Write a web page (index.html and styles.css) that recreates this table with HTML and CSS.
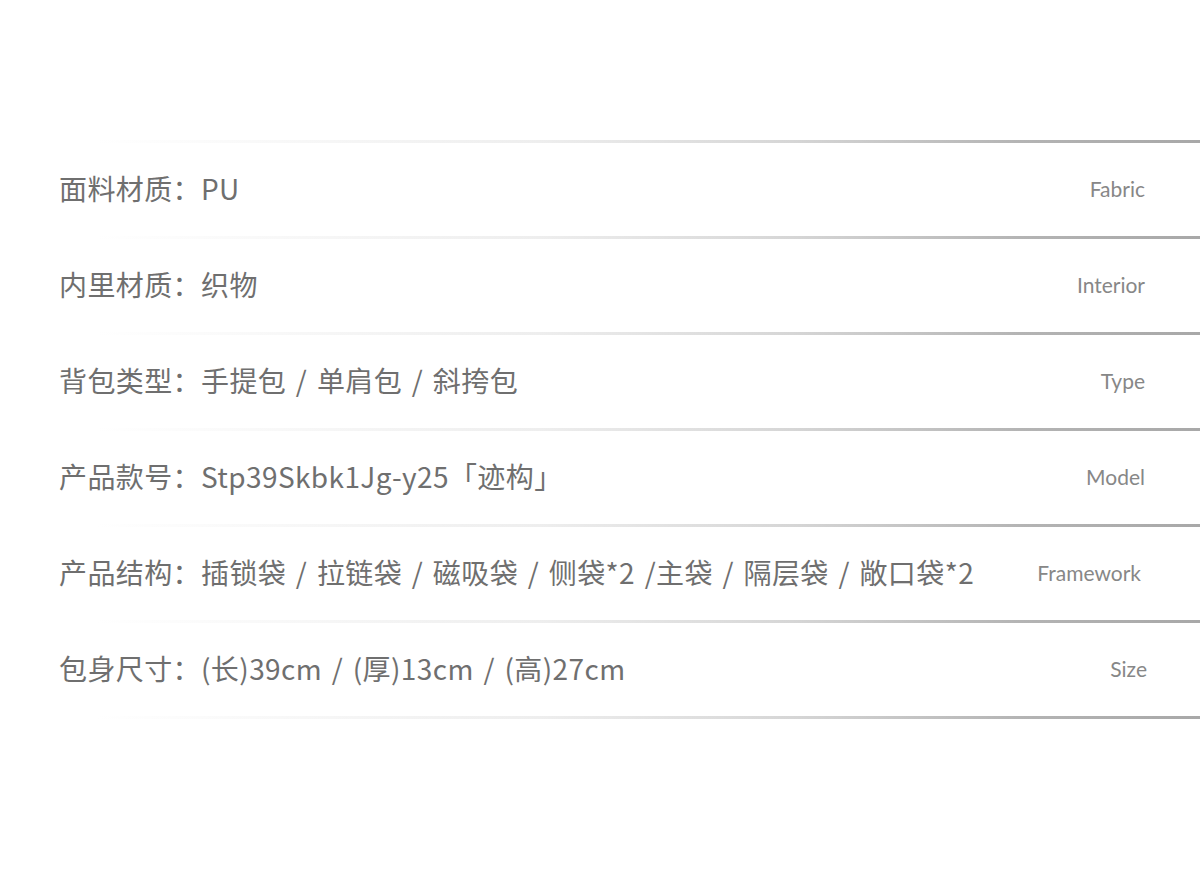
FILE: index.html
```html
<!DOCTYPE html>
<html lang="zh-CN">
<head>
<meta charset="utf-8">
<title>产品参数</title>
<link rel="stylesheet" href="styles.css">
</head>
<body>
<div class="specs">
  <div class="row"><span class="val">面料材质：PU</span><span class="en">Fabric</span></div>
  <div class="row"><span class="val">内里材质：织物</span><span class="en">Interior</span></div>
  <div class="row"><span class="val">背包类型：手提包 / 单肩包 / 斜挎包</span><span class="en">Type</span></div>
  <div class="row"><span class="val">产品款号：Stp39Skbk1Jg-y25「迹构」</span><span class="en">Model</span></div>
  <div class="row"><span class="val">产品结构：插锁袋 / 拉链袋 / 磁吸袋 / 侧袋*2 /主袋 / 隔层袋 / 敞口袋*2</span><span class="en en-wide">Framework</span></div>
  <div class="row last"><span class="val">包身尺寸：(长)39cm / (厚)13cm / (高)27cm</span><span class="en en-size">Size</span></div>
</div>
</body>
</html>
```

FILE: styles.css
```css
html, body {
  margin: 0;
  padding: 0;
  background: #ffffff;
}
body {
  width: 1200px;
  height: 869px;
  overflow: hidden;
}
.specs {
  padding-top: 140px;
}
.row {
  height: 93px;
  padding: 3px 55px 0 59px;
  display: flex;
  align-items: center;
  justify-content: space-between;
  background-image: linear-gradient(to right, rgba(200,200,200,0) 8%, #eeeeee 45%, #d6d6d6 66%, #b4b4b4 85%, #a8a8a8 100%);
  background-size: 100% 3px;
  background-position: top left;
  background-repeat: no-repeat;
}
.row.last {
  padding-bottom: 3px;
  background-image:
    linear-gradient(to right, rgba(200,200,200,0) 8%, #eeeeee 45%, #d6d6d6 66%, #b4b4b4 85%, #a8a8a8 100%),
    linear-gradient(to right, rgba(200,200,200,0) 8%, #eeeeee 45%, #d6d6d6 66%, #b4b4b4 85%, #a8a8a8 100%);
  background-size: 100% 3px, 100% 3px;
  background-position: top left, bottom left;
}
.val {
  font-family: "Noto Sans CJK SC", "Noto Sans", sans-serif;
  font-size: 28px;
  color: #6f6f6f;
  white-space: nowrap;
  letter-spacing: 0.4px;
  word-spacing: 3px;
  margin-top: -3px;
}
.en {
  font-family: Lato, "Liberation Sans", sans-serif;
  font-weight: 400;
  font-size: 21px;
  color: #878787;
  white-space: nowrap;
  margin-top: -3px;
}
.en-wide {
  margin-right: 4px;
}
.en-size {
  margin-right: -2px;
}
```
